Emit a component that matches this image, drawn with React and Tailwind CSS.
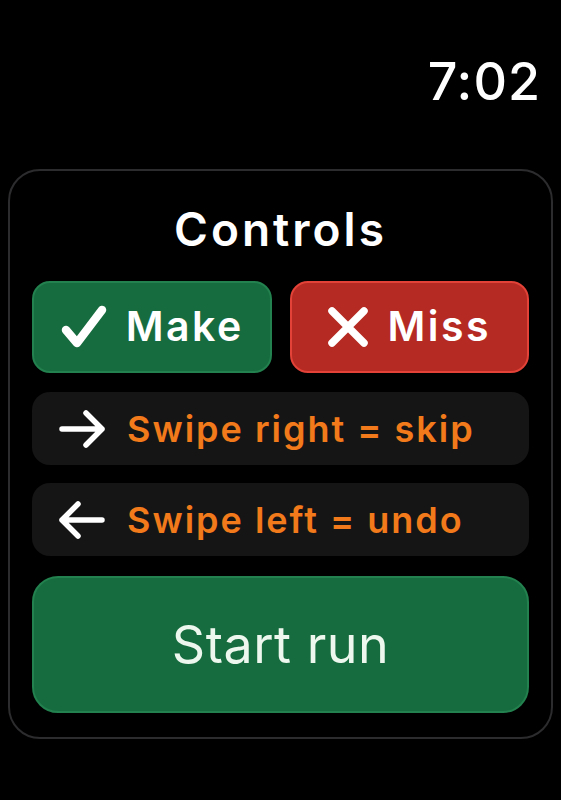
import React from 'react';

function Check() {
  return (
    <svg width="48" height="44" viewBox="0 0 48 44" fill="none">
      <path d="M6 25 L17 38 L42 5" stroke="white" strokeWidth="8.5" strokeLinecap="round" strokeLinejoin="round" />
    </svg>
  );
}

function Cross() {
  return (
    <svg width="42" height="40" viewBox="0 0 42 40" fill="none">
      <path d="M5 4 L37 36 M37 4 L5 36" stroke="white" strokeWidth="7.5" strokeLinecap="round" />
    </svg>
  );
}

function Arrow({ left }) {
  return (
    <svg width="48" height="38" viewBox="0 0 48 38" fill="none" className={left ? 'rotate-180' : ''}>
      <path d="M4 19 H44 M28 3 L44 19 L28 35" stroke="white" strokeWidth="5.5" strokeLinecap="round" strokeLinejoin="round" />
    </svg>
  );
}

export default function App() {
  return (
    <div className="min-h-[800px] w-[561px] bg-black font-['Inter','Noto_Sans',sans-serif] text-white">
      {/* hora */}
      <div className="flex justify-end pr-[20px] pt-[56px] text-[52px] font-medium leading-none tracking-[1px]">
        7:02
      </div>

      {/* tarjeta de controles */}
      <div className="mx-[8px] mt-[61px] rounded-[32px] border-2 border-[#2c2c2e] px-[22px] pb-[24px] pt-[35px]">
        <h1 className="text-center text-[46px] font-semibold leading-none tracking-[3px]">Controls</h1>

        <div className="mt-[29px] grid grid-cols-2 gap-[18px]">
          <button className="flex h-[92px] items-center justify-center gap-[18px] rounded-[18px] border-2 border-[#22814e] bg-[#176c3f] text-[41px] font-semibold tracking-[2.5px]">
            <Check />
            <span>Make</span>
          </button>
          <button className="flex h-[92px] items-center justify-center gap-[18px] rounded-[18px] border-2 border-[#e24237] bg-[#b52a22] text-[41px] font-semibold tracking-[2.5px]">
            <Cross />
            <span>Miss</span>
          </button>
        </div>

        <div className="mt-[19px] flex flex-col gap-[18px]">
          <div className="flex h-[73px] items-center gap-[21px] rounded-[18px] bg-[#151515] pl-[26px] text-[36px] font-semibold tracking-[2px] text-[#f27a1a]">
            <Arrow />
            <span>Swipe right = skip</span>
          </div>
          <div className="flex h-[73px] items-center gap-[21px] rounded-[18px] bg-[#151515] pl-[26px] text-[36px] font-semibold tracking-[2px] text-[#f27a1a]">
            <Arrow left />
            <span>Swipe left = undo</span>
          </div>
          <button className="mt-[2px] flex h-[137px] items-center justify-center rounded-[26px] border-2 border-[#22814e] bg-[#176c3f] text-[52px] font-normal tracking-[0.5px] text-[#eef7ee]">
            Start run
          </button>
        </div>
      </div>
    </div>
  );
}
